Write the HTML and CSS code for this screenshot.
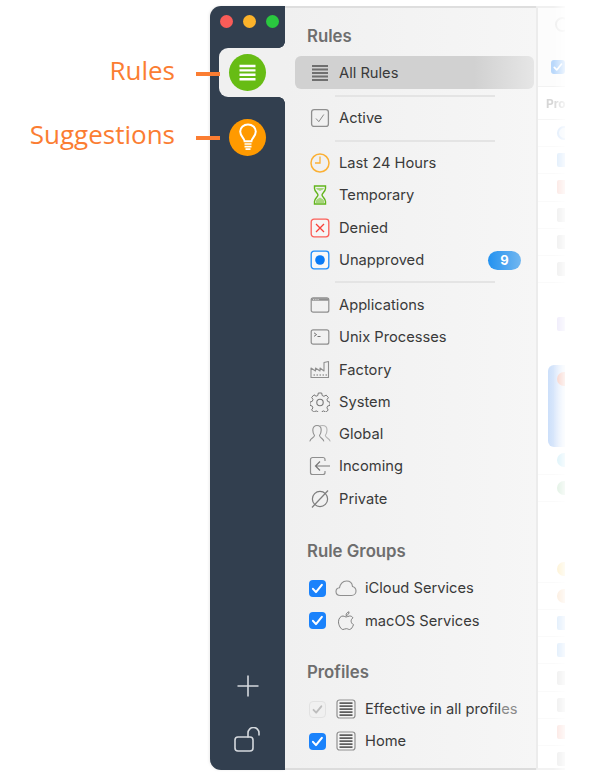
FILE: index.html
```html
<!DOCTYPE html>
<html lang="en">
<head>
<meta charset="utf-8">
<title>Rules</title>
<link rel="stylesheet" href="styles.css">
</head>
<body>
<svg class="defs" width="0" height="0" aria-hidden="true">
  <symbol id="stack" viewBox="0 0 20 20">
    <path d="M2 3h16M2 6.500h16M2 10h16M2 13.500h16M2 17h16" fill="none" stroke="#6f6f6f" stroke-width="2.200"/>
  </symbol>
  <symbol id="profile" viewBox="0 0 20 20">
    <rect x="1" y="1" width="18" height="18" rx="2.500" fill="#f4f4f4" stroke="#8f8f8f" stroke-width="1.200"/>
    <path d="M3.500 4.200h13M3.500 7.200h13M3.500 10.200h13M3.500 13.200h13M3.500 16.200h13" fill="none" stroke="#5f5f5f" stroke-width="1.700"/>
  </symbol>
  <symbol id="tick" viewBox="0 0 18 18">
    <path d="M4.200 9.400l3.200 3.400 6.200-7.600" fill="none" stroke="currentColor" stroke-width="2.200" stroke-linecap="round" stroke-linejoin="round"/>
  </symbol>
</svg>
<div class="stage">
  <div class="notes">
    <div class="note"><span class="note-label">Rules</span><span class="dash"></span></div>
    <div class="note"><span class="note-label">Suggestions</span><span class="dash"></span></div>
  </div>
  <div class="window">
    <aside class="sidebar">
      <div class="lights"><span class="light red"></span><span class="light amber"></span><span class="light green"></span></div>
      <div class="tab">
        <span class="round round-green">
          <svg width="17" height="17" viewBox="0 0 17 17"><path d="M.5 2h16M.5 6.400h16M.5 10.800h16M.5 15.200h16" fill="none" stroke="#fff" stroke-width="2.400"/></svg>
        </span>
      </div>
      <div class="tab-plain">
        <span class="round round-orange">
          <svg width="20" height="28" viewBox="0 0 20 28"><path d="M6.600 18.200c0-3-4.400-4.900-4.400-9.600C2.200 4.300 5.700 1.400 10 1.400s7.800 2.900 7.800 7.200c0 4.700-4.400 6.600-4.400 9.600z" fill="none" stroke="#fff" stroke-width="2"/><path d="M6.500 21h7M6.500 23.600h7M7.500 26.200h5" fill="none" stroke="#fff" stroke-width="1.700"/></svg>
        </span>
      </div>
      <div class="side-tools">
        <svg width="24" height="24" viewBox="0 0 24 24"><path d="M12 1.500v21M1.500 12h21" fill="none" stroke="#d5d9de" stroke-width="1.600"/></svg>
        <svg width="28" height="26" viewBox="0 0 28 26"><rect x="1" y="10" width="18" height="14" rx="3" fill="none" stroke="#d5d9de" stroke-width="1.600"/><path d="M14 10V6a5.500 5.500 0 0 1 11 0v2" fill="none" stroke="#d5d9de" stroke-width="1.600" stroke-linecap="round"/></svg>
      </div>
    </aside>
    <main class="panel">
      <h2 class="heading heading-first">Rules</h2>
      <div class="row row-selected">
        <svg class="ico" width="20" height="20"><use href="#stack"/></svg><span>All Rules</span>
      </div>
      <div class="sep"></div>
      <div class="row">
        <svg class="ico" width="20" height="20" viewBox="0 0 20 20"><rect x="1.600" y="1.600" width="16.800" height="16.800" rx="2.500" fill="none" stroke="#8f8f8f" stroke-width="1.300"/><path d="M6 10.500l2.800 3.200 5-7.200" fill="none" stroke="#8a8a8a" stroke-width="1"/></svg><span>Active</span>
      </div>
      <div class="sep"></div>
      <div class="row">
        <svg class="ico" width="20" height="20" viewBox="0 0 20 20"><circle cx="10" cy="10" r="9" fill="none" stroke="#fbb034" stroke-width="1.500"/><path d="M10 3.500V10H5" fill="none" stroke="#fbb034" stroke-width="1.300"/></svg><span>Last 24 Hours</span>
      </div>
      <div class="row">
        <svg class="ico" width="20" height="20" viewBox="0 0 20 20"><path d="M4.500 1h11v2.500c0 3-3.500 4.500-3.500 6.500s3.500 3.500 3.500 6.500V19h-11v-2.500c0-3 3.500-4.500 3.500-6.500S4.500 6.500 4.500 3.500z" fill="none" stroke="#62b51c" stroke-width="1.400"/><path d="M6 15.500c1-1.500 2.500-2 4-3 1.500 1 3 1.500 4 3v2.500H6zM6 3h8c-.5 1.500-2 2-4 3-2-1-3.500-1.500-4-3z" fill="#a7d67d"/></svg><span>Temporary</span>
      </div>
      <div class="row">
        <svg class="ico" width="20" height="20" viewBox="0 0 20 20"><rect x="1.200" y="1.200" width="17.600" height="17.600" rx="2.800" fill="#fff" fill-opacity=".35" stroke="#fb5f58" stroke-width="1.300"/><path d="M6 6l8 8M14 6l-8 8" fill="none" stroke="#f8413a" stroke-width="1.300"/></svg><span>Denied</span>
      </div>
      <div class="row row-badge">
        <svg class="ico" width="20" height="20" viewBox="0 0 20 20"><rect x="1.200" y="1.200" width="17.600" height="17.600" rx="2.800" fill="#fff" fill-opacity=".5" stroke="#1d8dfb" stroke-width="1.300"/><circle cx="10" cy="10" r="4.800" fill="#0a7bf5"/></svg><span>Unapproved</span><span class="badge">9</span>
      </div>
      <div class="sep"></div>
      <div class="row">
        <svg class="ico" width="20" height="20" viewBox="0 0 20 20"><rect x="1.200" y="2.800" width="17.600" height="14.400" rx="2" fill="none" stroke="#8f8f8f" stroke-width="1.200"/><path d="M1.500 5.800a2 2 0 0 1 1.700-2.500h13.600a2 2 0 0 1 1.700 2.500z" fill="#8f8f8f"/><path d="M3.200 4.600h1M5.400 4.600h1M7.600 4.600h1" stroke="#f2f2f2" stroke-width=".9"/></svg><span>Applications</span>
      </div>
      <div class="row">
        <svg class="ico" width="20" height="20" viewBox="0 0 20 20"><rect x="1.200" y="2.800" width="17.600" height="14.400" rx="2" fill="none" stroke="#8f8f8f" stroke-width="1.200"/><path d="M4 5.800l2.600 1.800L4 9.400M7.500 9.500h3" fill="none" stroke="#666" stroke-width=".9"/></svg><span>Unix Processes</span>
      </div>
      <div class="row">
        <svg class="ico" width="20" height="20" viewBox="0 0 20 20"><path d="M1 17.500V8l4.500 3V8l4.500 3V8l4 3V2.500l4.500-1v16z" fill="none" stroke="#8f8f8f" stroke-width="1.100" stroke-linejoin="round"/><path d="M3.500 15h1.500M6.500 15H8M9.500 15H11M12.500 15H14M15.500 15H17" stroke="#777" stroke-width="1"/></svg><span>Factory</span>
      </div>
      <div class="row">
        <svg class="ico" width="20" height="20" viewBox="0 0 20 20"><path d="M8.300 1h3.400l.5 2.500 1.700.8 2.300-1.200 2.200 2.500-1.400 2 .6 1.800 2.400.9v3l-2.400.8-.7 1.800 1.300 2.100-2.300 2.300-2.200-1.400-1.700.7-.5 2.400H8.300l-.5-2.400-1.700-.7-2.200 1.300-2.300-2.300 1.300-2-.7-1.800-2.200-.8v-3.200l2.300-.8.700-1.800-1.300-2.100L4 2.800l2.100 1.400 1.700-.7z" fill="none" stroke="#777" stroke-width="1" stroke-linejoin="round"/><circle cx="10" cy="10.500" r="3.200" fill="none" stroke="#777" stroke-width="1.100"/></svg><span>System</span>
      </div>
      <div class="row">
        <svg class="ico ico-wide" width="22" height="20" viewBox="0 0 22 20"><path d="M1 17c.3-3 4-3 4.500-5.500C4 9.500 3.800 7.500 3.800 6 3.800 3 5.800 1.500 8 1.500S12.200 3 12.200 6c0 1.500-.3 3.500-1.700 5.500.5 2.500 3.700 3 4.200 5.500" fill="none" stroke="#8f8f8f" stroke-width="1.100" stroke-linecap="round"/><path d="M11.500 1.800c.6-.2 1.300-.3 2-.3 2.400 0 4.500 1.500 4.500 4.500 0 1.500-.3 3.500-1.700 5.500.5 2.500 4.200 3 4.700 5.500" fill="none" stroke="#b4b4b4" stroke-width="1.100" stroke-linecap="round"/></svg><span>Global</span>
      </div>
      <div class="row">
        <svg class="ico ico-wide" width="22" height="20" viewBox="0 0 22 20"><path d="M16 5V3.500a2 2 0 0 0-2-2H3.500a2 2 0 0 0-2 2v13a2 2 0 0 0 2 2H14a2 2 0 0 0 2-2V15" fill="none" stroke="#8f8f8f" stroke-width="1.200"/><path d="M21 10H7M11 5.500L6.500 10l4.500 4.500" fill="none" stroke="#777" stroke-width="1.200"/></svg><span>Incoming</span>
      </div>
      <div class="row">
        <svg class="ico" width="20" height="20" viewBox="0 0 20 20"><circle cx="10" cy="10" r="7.600" fill="none" stroke="#7d7d7d" stroke-width="1.200"/><path d="M2 18.500L18 1.500" stroke="#7d7d7d" stroke-width="1.200"/></svg><span>Private</span>
      </div>
      <h2 class="heading heading-section">Rule Groups</h2>
      <div class="row row-check">
        <span class="check"><svg width="17" height="17"><use href="#tick"/></svg></span>
        <svg class="ico-sub" width="22" height="20" viewBox="0 0 22 20"><path d="M5.500 17.500C2.800 17.500 1 15.700 1 13.500c0-2 1.500-3.600 3.500-3.800C5 6.500 7.500 3 11.500 3c3.500 0 5.700 2.500 6 5.500 2 .5 3.500 2.300 3.500 4.500 0 2.500-2 4.500-4.500 4.500z" fill="none" stroke="#8f8f8f" stroke-width="1.100"/></svg>
        <span>iCloud Services</span>
      </div>
      <div class="row row-check">
        <span class="check"><svg width="17" height="17"><use href="#tick"/></svg></span>
        <svg class="ico-sub" width="22" height="20" viewBox="0 0 22 20"><path d="M11 6c1.300 0 2.200-1 3.700-1 1.400 0 2.600.7 3.300 1.800-2.800 1.700-2.300 5.600.5 6.800-.8 2.300-2.300 4.900-3.900 4.900-1.300 0-1.700-.8-3.300-.8s-2.200.8-3.400.8C6 18.500 3.500 14.300 3.500 10.800 3.500 7.200 5.800 5 8 5c1.300 0 2.200 1 3 1zM11 4.500c0-1.800 1.200-3.300 3-3.700.2 1.900-1.200 3.500-3 3.700z" fill="none" stroke="#7d7d7d" stroke-width="1"/></svg>
        <span>macOS Services</span>
      </div>
      <h2 class="heading heading-profiles">Profiles</h2>
      <div class="row row-check">
        <span class="check check-off"><svg width="17" height="17"><use href="#tick"/></svg></span>
        <svg class="ico-sub" width="20" height="20"><use href="#profile"/></svg>
        <span>Effective in all profil<span class="dim">es</span></span>
      </div>
      <div class="row row-check">
        <span class="check"><svg width="17" height="17"><use href="#tick"/></svg></span>
        <svg class="ico-sub" width="20" height="20"><use href="#profile"/></svg>
        <span>Home</span>
      </div>
    </main>
    <section class="detail">
      <div class="detail-top">
        <span class="search-ring"></span>
        <span class="pane-check"><svg width="14" height="14" viewBox="0 0 18 18"><use href="#tick"/></svg></span>
      </div>
      <div class="detail-head">Pro</div>
      <div class="thumb-row"><span class="thumb thumb-ring"></span></div>
      <div class="thumb-row"><span class="thumb thumb-blue"></span></div>
      <div class="thumb-row"><span class="thumb thumb-red"></span></div>
      <div class="thumb-row"><span class="thumb"></span></div>
      <div class="thumb-row"><span class="thumb"></span></div>
      <div class="thumb-row"><span class="thumb"></span></div>
      <div class="thumb-row thumb-row-gap"><span class="thumb thumb-purple"></span></div>
      <div class="selection"><span class="thumb thumb-coral"></span></div>
      <div class="thumb-row"><span class="thumb thumb-cyan"></span></div>
      <div class="thumb-row"><span class="thumb thumb-multi"></span></div>
      <div class="thumb-row thumb-row-gap2"><span class="thumb thumb-yellow"></span></div>
      <div class="thumb-row"><span class="thumb thumb-peach"></span></div>
      <div class="thumb-row"><span class="thumb thumb-blue"></span></div>
      <div class="thumb-row"><span class="thumb thumb-blue"></span></div>
      <div class="thumb-row"><span class="thumb"></span></div>
      <div class="thumb-row"><span class="thumb"></span></div>
      <div class="thumb-row"><span class="thumb thumb-red"></span></div>
      <div class="thumb-row"><span class="thumb"></span></div>
    </section>
  </div>
</div>
</body>
</html>
```

FILE: styles.css
```css
* { box-sizing: border-box; }
html, body { margin: 0; padding: 0; background: #fff; }
body { width: 600px; height: 776px; overflow: hidden; font-family: Inter, "Liberation Sans", sans-serif; }
.defs { display: block; height: 0; }

.stage { display: flex; align-items: flex-start; height: 776px; padding-top: 6px; }

.notes { width: 210px; padding-top: 36px; flex: none; }
.note { display: flex; justify-content: flex-end; align-items: center; height: 64px; }
.note-label { font-family: "Open Sans", sans-serif; font-size: 26px; color: #fb7d32; line-height: 46px; margin-top: -8px; }
.dash { position: relative; z-index: 2; width: 24px; height: 4px; margin: 0 -10px 0 21px; background: #fb7d32; }

.window { display: flex; width: 355px; height: 764px; }

.sidebar { display: flex; flex-direction: column; width: 75px; flex: none; background: #323f4f; border-radius: 11px 0 0 11px; box-shadow: -1px 0 3px rgba(0,0,0,.08); }
.lights { display: flex; gap: 10px; height: 42px; padding: 8.500px 0 0 10px; }
.light { width: 13px; height: 13px; border-radius: 50%; }
.light.red { background: #f95c58; }
.light.amber { background: #fcb32a; margin-left: -.5px; }
.light.green { background: #2ac83f; }

.tab { position: relative; display: flex; align-items: center; height: 49px; margin-left: 9px; padding-left: 10px; background: #f0f0f0; border-radius: 9px 0 0 9px; }
.tab::before, .tab::after { content: ""; position: absolute; right: 0; width: 6px; height: 6px; }
.tab::before { top: -6px; background: radial-gradient(circle at 0 0, transparent 5.500px, #f0f0f0 6px); }
.tab::after { bottom: -6px; background: radial-gradient(circle at 0 100%, transparent 5.500px, #f0f0f0 6px); }
.tab-plain { display: flex; align-items: center; height: 37px; margin-top: 21.500px; padding-left: 19px; }

.round { display: flex; align-items: center; justify-content: center; width: 37px; height: 37px; border-radius: 50%; }
.round-green { background: #67bc14; }
.round-orange { background: #ff9a00; }

.side-tools { display: flex; flex-direction: column; align-items: center; gap: 29px; margin-top: auto; padding: 0 0 17px 0; }

.panel { display: flex; flex-direction: column; width: 251px; flex: none; padding: 0 2px 0 10px; background: linear-gradient(90deg, #f0f0f0, #f6f6f6); border-top: 2px solid #dedede; border-bottom: 2px solid #dcdcdc; color: #3a3a3a; font-size: 14.700px; }
.heading { margin: 0; padding-left: 12px; font-size: 16.800px; font-weight: 600; line-height: 20px; color: #6e6e6e; }
.heading-first { margin-top: 18px; margin-bottom: 10px; }
.heading-section { margin-top: 26.500px; margin-bottom: 11px; }
.heading-profiles { margin-top: 25.500px; margin-bottom: 10.500px; }

.row { display: flex; align-items: center; height: 32.300px; padding-left: 15px; }
.row-selected { height: 33px; margin-bottom: .5px; border-radius: 6px; background: linear-gradient(90deg, #d1d1d1 0, #d1d1d1 75%, #e6e6e6 100%); }
.ico { flex: none; margin-right: 9px; }
.ico-wide { margin-left: -1px; margin-right: 8px; }
.sep { height: 2px; margin: 5.300px 39px 5.300px 40px; background: #e4e4e4; flex: none; }
.row-badge { padding-right: 13px; }
.badge { display: flex; align-items: center; justify-content: center; width: 33px; height: 19px; margin-left: auto; border-radius: 10px; background: linear-gradient(90deg, #2392f0, #72b7f0); color: #fff; font-size: 13px; font-weight: 700; }

.row-check { padding-left: 14px; }
.check { display: flex; align-items: center; justify-content: center; width: 17px; height: 17px; flex: none; border-radius: 4px; background: #1a82fb; color: #fff; }
.check-off { background: #f0f0f0; border: 1px solid #e2e2e2; color: #bdbdbd; }
.ico-sub { flex: none; margin: 0 8px 0 9px; width: 22px; }
.dim { color: #8a8a8a; }

.detail { width: 29px; flex: none; overflow: hidden; background: #fff; border-left: 2px solid #ececec; border-top: 2px solid #f0f0f0; border-bottom: 2px solid #f2f2f2; filter: blur(.5px); -webkit-mask-image: linear-gradient(90deg, #000 60%, rgba(0,0,0,.25) 100%); mask-image: linear-gradient(90deg, #000 60%, rgba(0,0,0,.25) 100%); }
.detail-top { height: 79px; background: #fcfcfc; border-bottom: 1px solid #f2f2f2; padding: 8px 0 0 14px; }
.search-ring { display: block; width: 15px; height: 15px; border: 2px solid #eee; border-radius: 50%; margin: 1px 0 0 3px; }
.pane-check { display: flex; align-items: center; justify-content: center; width: 14px; height: 14px; margin-top: 28px; margin-left: -1px; border-radius: 3px; background: #b9d8fb; color: #fff; }
.detail-head { height: 33px; padding-left: 8px; border-bottom: 1px solid #f5f5f5; font-size: 12px; font-weight: 700; line-height: 33px; color: #d6d6d6; white-space: nowrap; }

.thumb-row { display: flex; align-items: center; height: 27.200px; padding-left: 19px; border-bottom: 1px solid #fafafa; }
.thumb-row-gap { margin-top: 27px; border-bottom: 0; }
.thumb-row-gap2 { margin-top: 54px; }
.thumb { display: block; width: 14px; height: 14px; flex: none; border-radius: 2px; background: #ededed; }
.thumb-ring { border-radius: 50%; border: 2px solid #dceafb; background: #f2f7fd; }
.thumb-blue { background: #dcebfb; }
.thumb-red { background: #fbe4e0; }
.thumb-purple { background: #ece8fa; }
.thumb-coral { border-radius: 50%; background: #f6cdc4; }
.thumb-cyan { border-radius: 50%; background: #d7f1f9; }
.thumb-multi { border-radius: 50%; background: #dcefe0; }
.thumb-yellow { border-radius: 50%; background: #fdf0cd; }
.thumb-peach { border-radius: 50%; background: #fbead9; }

.selection { display: flex; align-items: flex-start; height: 82px; margin: 28px 0 0 10px; padding: 7px 0 0 9px; background: linear-gradient(90deg, #ccdffa, #f0f5fd); border-radius: 6px 0 0 6px; }
```
